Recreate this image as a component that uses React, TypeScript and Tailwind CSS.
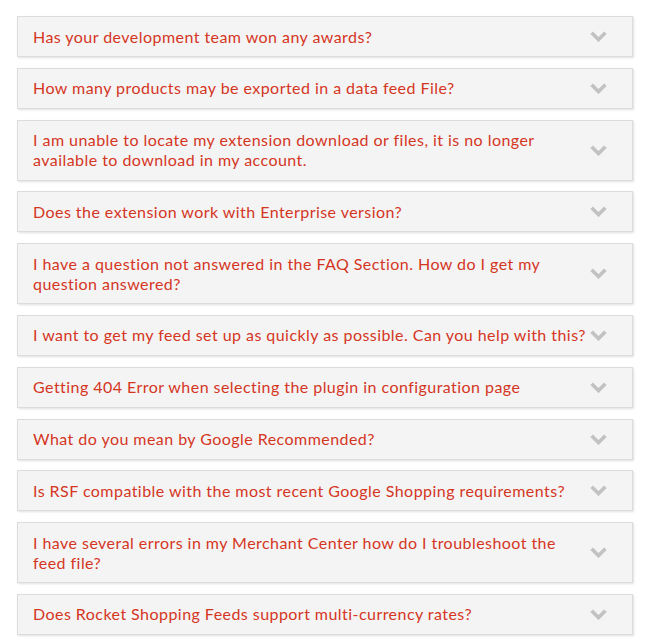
const faqs: string[][] = [
  ["Has your development team won any awards?"],
  ["How many products may be exported in a data feed File?"],
  [
    "I am unable to locate my extension download or files, it is no longer",
    "available to download in my account.",
  ],
  ["Does the extension work with Enterprise version?"],
  ["I have a question not answered in the FAQ Section. How do I get my", "question answered?"],
  ["I want to get my feed set up as quickly as possible. Can you help with this?"],
  ["Getting 404 Error when selecting the plugin in configuration page"],
  ["What do you mean by Google Recommended?"],
  ["Is RSF compatible with the most recent Google Shopping requirements?"],
  ["I have several errors in my Merchant Center how do I troubleshoot the", "feed file?"],
  ["Does Rocket Shopping Feeds support multi-currency rates?"],
];

const Chevron = () => (
  <svg width="17" height="11" viewBox="0 0 17 11" className="shrink-0">
    <path d="M1.6 1.8 L8.5 8.6 L15.4 1.8" fill="none" stroke="#c2c2c2" strokeWidth="3.6" />
  </svg>
);

export default function App() {
  return (
    <div className="min-h-[644px] bg-white pt-4 px-[17px] font-['Lato',sans-serif]">
      <div className="flex w-[616px] flex-col gap-[10.8px]">
        {faqs.map((lines, i) => (
          <div
            key={i}
            className="flex items-center gap-1 border border-[#dcdcdc] bg-[#f4f4f4] py-[9.5px] pl-[15px] pr-[25px] shadow-[1px_1px_2px_rgba(0,0,0,0.12)]"
          >
            <div className="min-w-0 flex-1 whitespace-nowrap text-[16px] leading-5 tracking-[0.45px] text-[#d4361f]">
              {lines.map((l, j) => (
                <span key={j}>
                  {j > 0 && <br />}
                  {l}
                </span>
              ))}
            </div>
            <Chevron />
          </div>
        ))}
      </div>
    </div>
  );
}
